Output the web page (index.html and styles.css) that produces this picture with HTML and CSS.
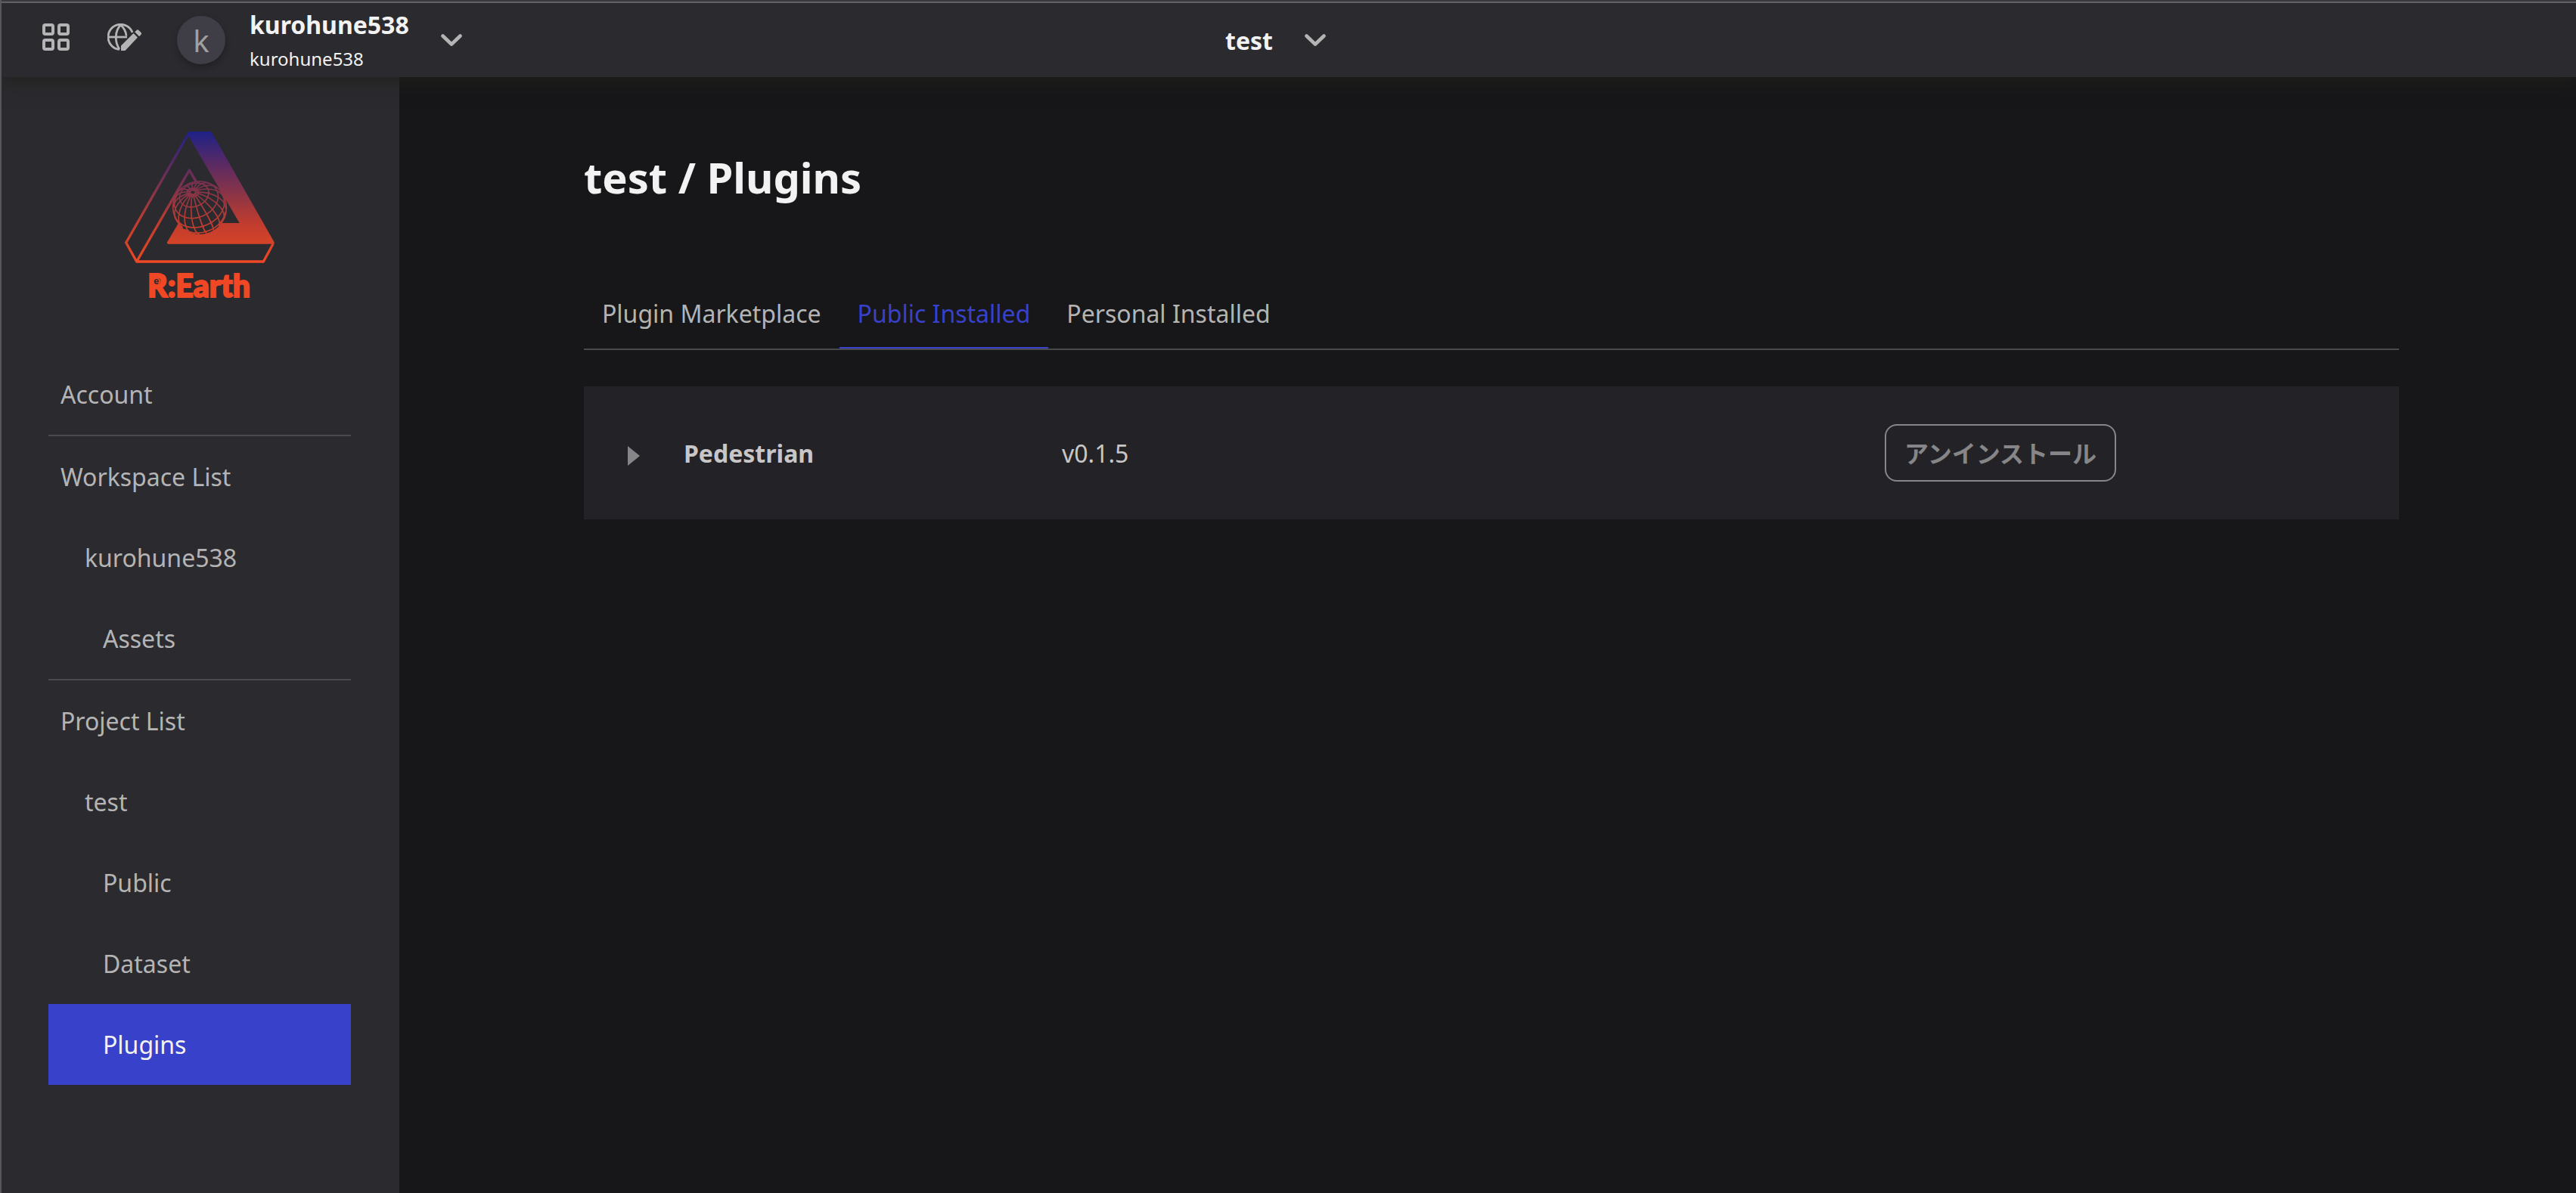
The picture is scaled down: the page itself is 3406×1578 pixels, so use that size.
FILE: index.html
```html
<!DOCTYPE html>
<html lang="ja">
<head>
<meta charset="utf-8">
<title>test / Plugins</title>
<link rel="stylesheet" href="styles.css">
</head>
<body>
<header class="header">
  <div class="header-left">
    <svg class="icon-grid" viewBox="0 0 36 36"><g fill="none" stroke="currentColor" stroke-width="4"><rect x="2" y="2" width="12" height="12" rx="2"/><rect x="22" y="2" width="12" height="12" rx="2"/><rect x="2" y="22" width="12" height="12" rx="2"/><rect x="22" y="22" width="12" height="12" rx="2"/></g></svg>
    <svg class="icon-globe" viewBox="0 0 46 36">
      <g fill="none" stroke="currentColor" stroke-width="2.8"><path d="M33 12A16.6 16.6 0 1 0 16 34.4"/><path d="M16 34C9.500 25 9.500 10 17.500 2C21.500 5.500 24.500 10 25 16.500"/><path d="M2 18H26"/></g>
      <path fill="currentColor" d="M18 29.500L34.500 13L40 18.500L23.500 36H18ZM36.200 11.300L38.600 8.900Q40 7.500 41.400 8.900L44.500 12Q45.900 13.400 44.500 14.800L42.100 17.200Z"/>
    </svg>
    <div class="avatar">k</div>
    <div class="account"><strong class="account-name">kurohune538</strong><span class="account-team">kurohune538</span></div>
    <svg class="chevron" viewBox="0 0 28 16"><path d="M2.500 2.500L14 13.500L25.500 2.500"/></svg>
  </div>
  <div class="header-project"><strong class="project-name">test</strong><svg class="chevron" viewBox="0 0 28 16"><path d="M2.500 2.500L14 13.500L25.500 2.500"/></svg></div>
</header>
<div class="body">
  <aside class="sidebar">
    <svg class="logo" viewBox="0 0 750 780">
      <defs><linearGradient id="lg" gradientUnits="userSpaceOnUse" x1="0" y1="72" x2="0" y2="590"><stop offset="0" stop-color="#1e2287"/><stop offset=".25" stop-color="#5a2a63"/><stop offset=".5" stop-color="#903544"/><stop offset=".7" stop-color="#c03c2e"/><stop offset=".86" stop-color="#d54328"/><stop offset="1" stop-color="#f04724"/></linearGradient></defs>
      <path fill="url(#lg)" d="M328 72H418L669 513L664 518H246L242 513L288 435H530L328 90Z"/>
      <path fill="none" stroke="url(#lg)" stroke-width="10" stroke-linejoin="round" d="M330 76L80 513L122 588H625L664 516M122 588L331 225L362 278"/>
      <circle class="logo-back" cx="372" cy="375" r="105"/>
      <g class="logo-lines">
        <path d="M478 375a106 103 0 1 0 -174 77M478 375a106 103 0 0 1 -30 72"/>
        <path d="M400.400 475A104 11.800 74.200 0 1 343.600 275M372 479A104 34 90 0 1 372 271M338.800 473.600A104 52.100 108.600 0 1 405.200 276.400M304 453.700A104 64 130.800 0 1 440 296.300M276.500 416.400A104 68 156.500 0 1 467.500 333.600M268.100 370.900A104 64 182.300 0 1 475.900 379.100M277.400 331.800A104 52.100 204.600 0 1 466.600 418.200M295.900 304.200A104 34 222.900 0 1 448.100 445.800M318.300 286A104 11.800 238.900 0 1 425.700 464"/>
        <ellipse class="logo-pole" cx="345" cy="313" rx="11" ry="8"/>
        <ellipse cx="345" cy="314" rx="23" ry="17"/>
        <ellipse cx="350" cy="324" rx="60" ry="45" transform="rotate(-23.500 350 324)"/>
        <path d="M401.700 275.400A90 68.200 -23.500 1 1 278.900 328.800M461 321.300A103.600 78.400 -23.500 1 1 272.100 403.400M475 389.600A97.700 74 -23.500 0 1 312.400 460.200"/>
      </g>
      <text class="logo-text" x="165" y="730" textLength="408" lengthAdjust="spacingAndGlyphs">R:Earth</text>
      <circle fill="#f04724" cx="200" cy="667" r="16"/>
      <text class="logo-e" x="200" y="677">e</text>
    </svg>
    <nav class="nav">
      <a class="item">Account</a>
      <a class="item ruled">Workspace List</a>
      <a class="item sub">kurohune538</a>
      <a class="item leaf">Assets</a>
      <a class="item ruled">Project List</a>
      <a class="item sub">test</a>
      <a class="item leaf">Public</a>
      <a class="item leaf">Dataset</a>
      <a class="item leaf active">Plugins</a>
    </nav>
  </aside>
  <main class="main">
    <h1 class="title">test / Plugins</h1>
    <div class="tabs"><a class="tab">Plugin Marketplace</a><a class="tab selected">Public Installed</a><a class="tab">Personal Installed</a></div>
    <section class="plugin">
      <svg class="arrow" viewBox="0 0 16 26"><path fill="currentColor" d="M0 0L16 13L0 26Z"/></svg>
      <strong class="plugin-name">Pedestrian</strong>
      <span class="plugin-version">v0.1.5</span>
      <button class="uninstall">アンインストール</button>
    </section>
  </main>
</div>
</body>
</html>
```
FILE: styles.css
```css
* { box-sizing: border-box; }
body {
  margin: 0;
  height: 1578px;
  display: flex;
  flex-direction: column;
  border-left: 2px solid #57575a;
  background: #171719;
  color: #b4b4b4;
  font: 32px/1.362 "Noto Sans", "Noto Sans CJK JP", sans-serif;
  overflow: hidden;
}
.header {
  height: 102px;
  flex: none;
  display: grid;
  grid-template-columns: 1618px 1fr;
  border-top: 2px solid #39393c;
  background: #2b2a2f;
  box-shadow: inset 0 2px #626266, 0 4px 24px #20201c;
  padding-top: 2px;
  z-index: 1;
}
.header-left { display: flex; align-items: center; padding-left: 54px; }
.icon-grid { width: 36px; height: 36px; margin: -8px 50px 0 0; }
.icon-globe { width: 46px; height: 36px; margin: -8px 46px 0 0; }
.avatar {
  width: 64px;
  height: 64px;
  border-radius: 50%;
  background: #3f3d45;
  box-shadow: 0 4px 8px rgba(0, 0, 0, .25);
  font-size: 40px;
  line-height: 66px;
  text-align: center;
  color: #a0a0a0;
}
.account { display: flex; flex-direction: column; margin-left: 32px; width: 253px; padding-top: 8px; color: #f2f2f2; }
.account-name { line-height: 44px; margin-top: -2px; }
.account-team { font-size: 24px; line-height: 46px; }
.chevron { width: 28px; height: 16px; fill: none; stroke: #b4b4b4; stroke-width: 4.6; stroke-linecap: round; stroke-linejoin: round; }
.header-project { display: flex; align-items: center; gap: 42px; color: #f2f2f2; }
.project-name { padding-top: 2px; }
.body { flex: 1; display: flex; min-height: 0; }
.sidebar { width: 526px; flex: none; padding: 48px 64px 0 62px; background: #2b2a2f; }
.logo { display: block; width: 250px; height: 260px; margin: 0 auto 58px 76px; }
.logo-back { fill: #2b2a2f; }
.logo-lines { fill: none; stroke: url(#lg); stroke-width: 5; }
.logo-pole { fill: #2b2a2f; }
.logo-text { font: 900 126px Lato, sans-serif; fill: #f04724; stroke: #f04724; stroke-width: 6; }
.logo-e { font: 900 38px Lato, sans-serif; fill: #2b2a2f; text-anchor: middle; }
.nav { display: flex; flex-direction: column; }
.item { height: 107px; line-height: 108px; padding-left: 16px; }
.ruled { height: 109px; border-top: 2px solid #4a4a4a; }
.sub { padding-left: 48px; }
.leaf { padding-left: 72px; }
.active { background: #3841c9; color: #f2f2f2; }
.main { width: 2400px; margin-left: 244px; padding-top: 94px; }
.title { margin: 0; font-size: 56px; line-height: 76px; color: #f2f2f2; }
.tabs { display: flex; margin-top: 97px; height: 94px; border-bottom: 2px solid #4a4a4a; }
.tab { padding: 0 24px; line-height: 91px; border-bottom: 2px solid transparent; }
.selected { color: #3841c9; border-color: #3841c9; }
.plugin { display: flex; align-items: center; height: 176px; margin-top: 48px; background: #232226; }
.arrow { width: 16px; height: 26px; margin: 8px 58px 0 58px; color: #868688; }
.plugin-name { width: 500px; padding-top: 2px; color: #c8c6c6; }
.plugin-version { width: 1088px; padding-top: 2px; color: #c8c6c6; }
.uninstall {
  width: 306px;
  height: 76px;
  padding: 0 0 3px;
  border: 2px solid #868688;
  border-radius: 16px;
  background: none;
  color: #868688;
  font: bold 32px/44px "Noto Sans CJK JP", sans-serif;
}
```
